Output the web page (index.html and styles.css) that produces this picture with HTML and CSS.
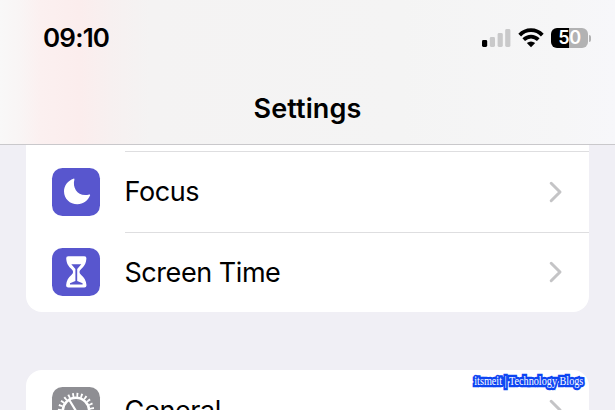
FILE: index.html
```
<!DOCTYPE html>
<html lang="en">
<head>
<meta charset="utf-8">
<title>Settings</title>
<link rel="stylesheet" href="styles.css">
</head>
<body>
<header class="header">
  <div class="status">
    <span class="time">09:10</span>
    <div class="indicators">
      <svg class="signal" width="30" height="20" viewBox="0 0 30 20">
        <rect x="0" y="12" width="5.2" height="7" rx="1.4" fill="#000"/>
        <g fill="#c9c9ca"><rect x="7.8" y="9" width="5.2" height="10" rx="1.4"/><rect x="15.6" y="5" width="5.2" height="14" rx="1.4"/><rect x="23.2" y="1" width="5.2" height="18" rx="1.4"/></g>
      </svg>
      <svg class="wifi" width="26" height="20" viewBox="0 0 26 20">
        <g fill="none" stroke="#000" stroke-width="3.8"><path d="M1.7 7.1Q6.3 2.2 13 2.2T24.3 7.1"/><path d="M5.7 11.7Q9 8.6 13 8.6T20.3 11.7"/></g>
        <path d="M8.8 15Q13 11.8 17.2 15L13 19.2Z" fill="#000"/>
      </svg>
      <div class="battery"><span>50</span></div>
      <i class="cap"></i>
    </div>
  </div>
  <h1 class="title">Settings</h1>
</header>
<main class="list">
  <section class="card card-top">
    <div class="row">
      <svg class="icon indigo" viewBox="0 0 48 48">
        <path d="M21.5 10.7C22.1 10.4 22.6 10.8 22.4 11.5C20 20.5 26.5 29.5 37.2 26.5C38 26.3 38.4 26.8 38 27.6C36 32.7 31.2 36.3 25.4 36.3C17.9 36.3 12 30.6 12 23.2C12 17.5 16 12.5 21.5 10.7Z" fill="#fff"/>
      </svg>
      <div class="body"><span>Focus</span><svg class="chevron" viewBox="0 0 14 22"><path d="M2.2 2.3L11 11L2.2 19.7"/></svg></div>
    </div>
    <div class="row">
      <svg class="icon indigo" viewBox="0 0 48 48">
        <path d="M16.3 8.3H32.3Q34.6 8.3 34.4 10.5C34 15.7 32.2 18.3 29.2 21C26.9 23.1 26.9 25.1 29.2 27C32.2 29.5 34.1 32.3 34.5 37.3Q34.6 39.6 32.3 39.6H16.3Q14 39.6 14.1 37.3C14.5 32.3 16.4 29.5 19.4 27C21.7 25.1 21.7 23.1 19.4 21C16.4 18.3 14.6 15.7 14.2 10.5Q14 8.3 16.3 8.3Z" fill="#fff"/>
        <path d="M19.3 16.3H29.3L25.2 21V33L30.6 35.2V36.4H18V35.2L23.4 33V21Z" fill="#5856ce"/>
      </svg>
      <div class="body"><span>Screen Time</span><svg class="chevron" viewBox="0 0 14 22"><path d="M2.2 2.3L11 11L2.2 19.7"/></svg></div>
    </div>
  </section>
  <section class="card card-next">
    <div class="row">
      <svg class="icon gray" viewBox="0 0 48 48">
        <g fill="none" stroke="#fff">
          <circle cx="24" cy="24" r="16.2" stroke-width="4" stroke-dasharray="1.8 2.441"/>
          <circle cx="24" cy="24" r="13.2" stroke-width="2.6"/>
          <path d="M24 24L16.7 12M24 24L16.7 36M24 24H38" stroke-width="2.2"/>
        </g>
      </svg>
      <div class="body"><span>General</span><svg class="chevron" viewBox="0 0 14 22"><path d="M2.2 2.3L11 11L2.2 19.7"/></svg></div>
    </div>
  </section>
</main>
<div class="watermark">itsmeit | Technology Blogs</div>
</body>
</html>
```
FILE: styles.css
```
* { box-sizing: border-box; }
body {
  margin: 0;
  width: 615px;
  height: 410px;
  overflow: hidden;
  background: #f0eff5;
  color: #000;
  font-family: Inter, "Liberation Sans", sans-serif;
}
.header {
  height: 145px;
  border-bottom: 1px solid #c9c8cb;
  background: linear-gradient(90deg, #f9f8f8 0, #f9f5f5 20px, #fbf0f0 40px, #fbeded 80px, #f7f0f0 110px, #f4f3f3 150px, #f4f4f4 400px, #f6f6f7 560px, #f7f7fa 615px);
}
.status {
  display: flex;
  justify-content: space-between;
  height: 76px;
  padding: 0 24px 0 43px;
  align-items: center;
}
.time { font-size: 26px; font-weight: 600; line-height: 30px; letter-spacing: -0.8px; }
.indicators { display: flex; align-items: center; }
.signal { margin-right: 6px; }
.wifi { margin-right: 7px; }
.battery {
  width: 37px;
  height: 20px;
  border-radius: 6px;
  background: linear-gradient(90deg, #000 50%, #b2b2b3 50%);
  color: #fff;
  font-size: 18px;
  font-weight: 600;
  line-height: 20px;
  letter-spacing: -0.3px;
  text-align: center;
}
.cap { width: 2px; height: 7px; margin-left: 1px; border-radius: 0 3px 3px 0; background: #b2b2b3; }
.title { margin: 16px 0 0; font-size: 27px; font-weight: 600; line-height: 34px; letter-spacing: 0.1px; text-align: center; }
.list { height: 265px; overflow: hidden; padding: 0 26.5px 0 26px; }
.card { background: #fff; }
.card-top { padding-top: 6px; border-radius: 0 0 16px 16px; }
.card-next { margin-top: 58px; border-radius: 16px 16px 0 0; }
.row { display: flex; align-items: center; height: 80.5px; padding-left: 26px; }
.icon { width: 48px; height: 48px; border-radius: 10.5px; margin: 1px 24.5px 0 0; flex: none; }
.indigo { background: #5856ce; }
.gray { background: #8e8e93; }
.body {
  display: flex;
  flex: 1;
  align-items: center;
  justify-content: space-between;
  height: 100%;
  padding: 0 26px 0 0;
  font-size: 27px;
  letter-spacing: -0.45px;
}
.card-top .body { border-top: 1px solid #dedee0; }
.chevron { width: 14px; height: 22px; fill: none; stroke: #c4c4c6; stroke-width: 3; stroke-linecap: round; stroke-linejoin: round; }
.watermark {
  position: absolute;
  right: 31.5px;
  top: 374px;
  color: #fff;
  font: 12px/15px "Liberation Serif", serif;
  white-space: nowrap;
  transform: scaleX(0.85);
  transform-origin: right center;
  -webkit-text-stroke: 4.5px #0d45f2;
  paint-order: stroke fill;
}
```
